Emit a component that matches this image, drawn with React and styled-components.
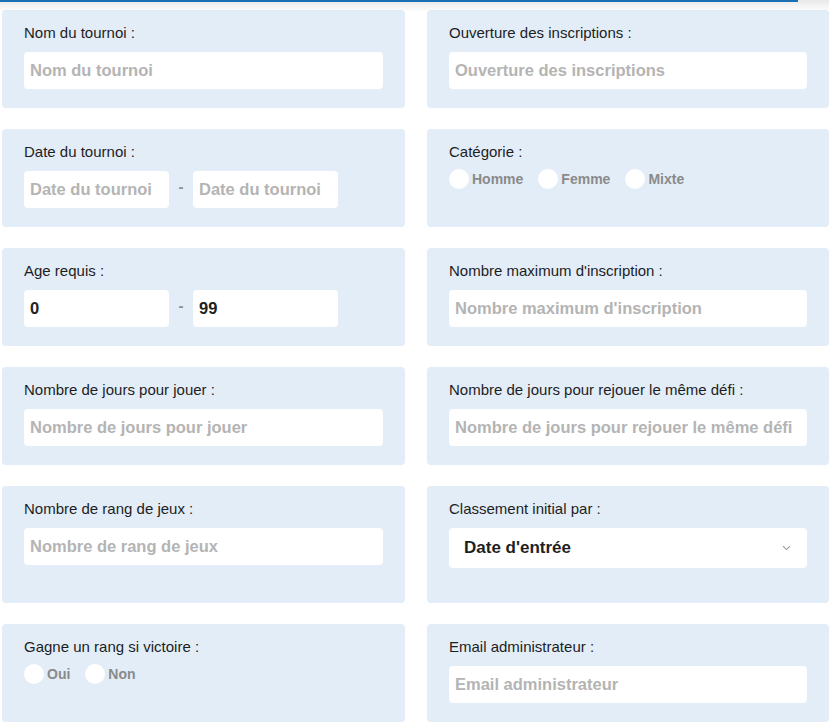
import React from 'react'
import styled, { createGlobalStyle } from 'styled-components'

const GlobalStyle = createGlobalStyle`
  html, body {
    margin: 0;
    padding: 0;
    background: #fff;
    font-family: "Liberation Sans", Arial, sans-serif;
  }
`

const Screen = styled.div`
  position: relative;
  width: 829px;
  height: 726px;
  overflow: hidden;
`

const HeaderShadow = styled.div`
  position: absolute;
  top: 0;
  left: 0;
  right: 0;
  height: 12px;
  pointer-events: none;
  background: linear-gradient(to bottom, rgba(0, 0, 0, 0.09), rgba(0, 0, 0, 0));

  &::before {
    content: '';
    position: absolute;
    top: 0;
    left: 0;
    width: 798px;
    height: 2px;
    background: #1b6fb3;
  }
`

const Form = styled.form`
  display: grid;
  grid-template-columns: 403px 402px;
  column-gap: 22px;
  row-gap: 21px;
  padding: 10px 0 0 2px;
`

const Card = styled.div`
  background: #e3edf7;
  border-radius: 4px;
  padding: 13px 22px 19px;
  display: flex;
  flex-direction: column;
`

const Label = styled.label`
  font-size: 15px;
  line-height: 20px;
  color: #1d1d1f;
  margin-bottom: 9px;
`

const Row = styled.div`
  display: flex;
  align-items: center;
`

const RadioRow = styled(Row)`
  margin-top: -2px;
`

const Input = styled.input`
  box-sizing: border-box;
  width: ${p => p.$width || '100%'};
  height: 37px;
  border: none;
  outline: none;
  border-radius: 4px;
  background: #fff;
  padding: 0 6px;
  font-family: "Liberation Sans", Arial, sans-serif;
  font-size: 16.5px;
  font-weight: 700;
  color: #222;

  &::placeholder {
    color: #b4b4b4;
  }
`

const Dash = styled.span`
  width: 24px;
  text-align: center;
  color: #8d8d8d;
  font-size: 15px;
  font-weight: 700;
  margin-top: -6px;
`

const Radio = styled.label`
  display: flex;
  align-items: center;
  margin-right: 15px;
  font-size: 14px;
  font-weight: 700;
  color: #8a8a8a;
`

const Dot = styled.span`
  width: 20px;
  height: 20px;
  border-radius: 50%;
  background: #fff;
  margin-right: 3px;
`

const Select = styled.div`
  box-sizing: border-box;
  height: 40px;
  border-radius: 4px;
  background: #fff;
  padding: 0 16px 0 15px;
  margin-bottom: 16px;
  display: flex;
  align-items: center;
  justify-content: space-between;
  font-size: 17px;
  font-weight: 700;
  color: #1f1f1f;
`

const Chevron = () => (
  <svg width="9" height="6" viewBox="0 0 9 6">
    <path d="M1 1.2 L4.5 4.6 L8 1.2" fill="none" stroke="#9a9a9a" strokeWidth="1.1" />
  </svg>
)

const Field = ({ label, children }) => (
  <Card>
    <Label>{label}</Label>
    {children}
  </Card>
)

const Radios = ({ options }) => (
  <RadioRow>
    {options.map(o => (
      <Radio key={o}>
        <Dot />
        {o}
      </Radio>
    ))}
  </RadioRow>
)

const App = () => {
  return (
    <Screen>
      <GlobalStyle />
      <Form>
        <Field label="Nom du tournoi :">
          <Input placeholder="Nom du tournoi" />
        </Field>
        <Field label="Ouverture des inscriptions :">
          <Input placeholder="Ouverture des inscriptions" />
        </Field>

        <Field label="Date du tournoi :">
          <Row>
            <Input $width="145px" placeholder="Date du tournoi" />
            <Dash>-</Dash>
            <Input $width="145px" placeholder="Date du tournoi" />
          </Row>
        </Field>
        <Field label="Catégorie :">
          <Radios options={['Homme', 'Femme', 'Mixte']} />
        </Field>

        <Field label="Age requis :">
          <Row>
            <Input $width="145px" defaultValue="0" />
            <Dash>-</Dash>
            <Input $width="145px" defaultValue="99" />
          </Row>
        </Field>
        <Field label="Nombre maximum d'inscription :">
          <Input placeholder="Nombre maximum d'inscription" />
        </Field>

        <Field label="Nombre de jours pour jouer :">
          <Input placeholder="Nombre de jours pour jouer" />
        </Field>
        <Field label="Nombre de jours pour rejouer le même défi :">
          <Input placeholder="Nombre de jours pour rejouer le même défi" />
        </Field>

        <Field label="Nombre de rang de jeux :">
          <Input placeholder="Nombre de rang de jeux" />
        </Field>
        <Field label="Classement initial par :">
          <Select>
            <span>Date d'entrée</span>
            <Chevron />
          </Select>
        </Field>

        <Field label="Gagne un rang si victoire :">
          <Radios options={['Oui', 'Non']} />
        </Field>
        <Field label="Email administrateur :">
          <Input placeholder="Email administrateur" />
        </Field>
      </Form>
      <HeaderShadow />
    </Screen>
  )
}

export default App
